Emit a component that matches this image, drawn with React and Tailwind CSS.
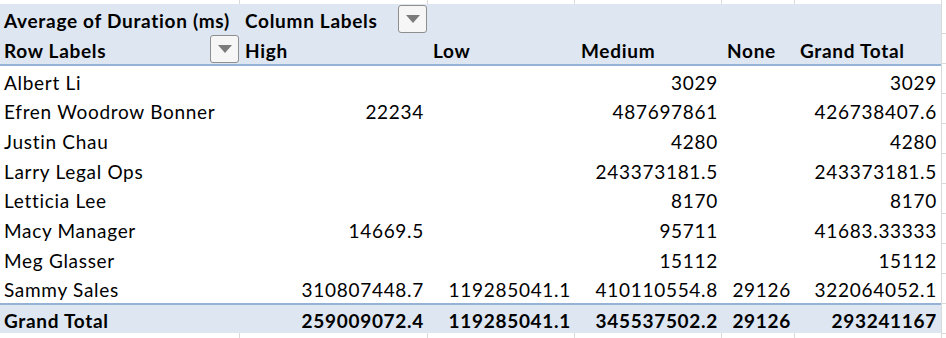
import React from "react";

const W = ["w-[240px]", "w-[188px]", "w-[147px]", "w-[147px]", "w-[73px]", "w-[146px]"];

const rows = [
  ["Albert Li", "", "", "3029", "", "3029"],
  ["Efren Woodrow Bonner", "22234", "", "487697861", "", "426738407.6"],
  ["Justin Chau", "", "", "4280", "", "4280"],
  ["Larry Legal Ops", "", "", "243373181.5", "", "243373181.5"],
  ["Letticia Lee", "", "", "8170", "", "8170"],
  ["Macy Manager", "14669.5", "", "95711", "", "41683.33333"],
  ["Meg Glasser", "", "", "15112", "", "15112"],
  ["Sammy Sales", "310807448.7", "119285041.1", "410110554.8", "29126", "322064052.1"],
];
const total = ["Grand Total", "259009072.4", "119285041.1", "345537502.2", "29126", "293241167"];

function Drop() {
  return (
    <div className="w-[29px] h-[28px] border border-[#8e8e8e] rounded-[3px] bg-[#f6f6f6] flex items-center justify-center shrink-0">
      <svg width="14" height="8" viewBox="0 0 14 8">
        <path d="M0 0 L14 0 L7 8 Z" fill="#7b7b7b" />
      </svg>
    </div>
  );
}

export default function App() {
  return (
    <div
      className="w-[946px] h-[338px] bg-white overflow-hidden flex text-black"
      style={{ fontFamily: "Lato, 'Open Sans', sans-serif" }}
    >
      <div className="w-[941px] shrink-0 flex flex-col text-[19px] tracking-[0.7px] leading-none">
        <div className="flex h-[4px] shrink-0">
          {W.map((w, i) => (
            <div key={i} className={`${w} shrink-0 ${i < 5 ? "border-r border-[#d9d9d9]" : ""}`} />
          ))}
        </div>
        <div className="bg-[#dde6f1] font-bold shrink-0">
          <div className="flex h-[30px] items-center">
            <div className={`${W[0]} pl-[4px] pt-[3px] shrink-0 whitespace-nowrap`}>Average of Duration (ms)</div>
            <div className={`${W[1]} pl-[5px] pr-[1px] shrink-0 flex items-center justify-between whitespace-nowrap`}>
              <span className="pt-[3px]">Column Labels</span>
              <Drop />
            </div>
          </div>
          <div className="flex h-[32px] items-start pt-[1px] border-b-2 border-[#95b3d7]">
            <div className={`${W[0]} pl-[4px] pr-[1px] shrink-0 flex items-center justify-between`}>
              <span className="pt-[3px]">Row Labels</span>
              <Drop />
            </div>
            <div className={`${W[1]} pl-[5px] pt-[6px] shrink-0`}>High</div>
            <div className={`${W[2]} pl-[5px] pt-[6px] shrink-0`}>Low</div>
            <div className={`${W[3]} pl-[6px] pt-[6px] shrink-0`}>Medium</div>
            <div className={`${W[4]} pl-[5px] pt-[6px] shrink-0`}>None</div>
            <div className={`${W[5]} pl-[5px] pt-[6px] shrink-0 whitespace-nowrap`}>Grand Total</div>
          </div>
        </div>
        {rows.map((r, ri) => (
          <div key={ri} className="flex h-[29.625px] items-center shrink-0">
            {r.map((c, ci) => (
              <div
                key={ci}
                className={`${W[ci]} shrink-0 pt-[3px] whitespace-nowrap ${ci === 0 ? "pl-[4px]" : "pr-[4px] text-right"}`}
              >
                {c}
              </div>
            ))}
          </div>
        ))}
        <div className="flex h-[30px] items-center bg-[#dde6f1] border-t-2 border-[#95b3d7] font-bold shrink-0">
          {total.map((c, ci) => (
            <div
              key={ci}
              className={`${W[ci]} shrink-0 pt-[3px] whitespace-nowrap ${ci === 0 ? "pl-[4px]" : "pr-[4px] text-right"}`}
            >
              {c}
            </div>
          ))}
        </div>
        <div className="flex flex-1">
          {W.map((w, i) => (
            <div key={i} className={`${w} shrink-0 ${i < 5 ? "border-r border-[#d9d9d9]" : ""}`} />
          ))}
        </div>
      </div>
      <div className="flex-1 border-l border-[#d9d9d9] flex flex-col">
        <div className="h-[34px] border-b border-[#d9d9d9] shrink-0" />
        <div className="h-[30px] border-b border-[#d9d9d9] shrink-0" />
        {Array.from({ length: 9 }).map((_, i) => (
          <div key={i} className="h-[30px] border-b border-[#d9d9d9] shrink-0" />
        ))}
      </div>
    </div>
  );
}
